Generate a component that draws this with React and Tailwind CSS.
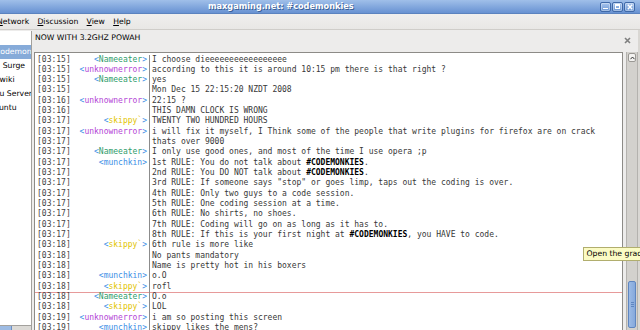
import React from 'react';

const NICK = {
  Nameeater: '#2f9d6c',
  unknownerror: '#b345d6',
  'skippy`': '#e2c400',
  munchkin: '#3d8fe6',
};

const lines = [
  ['03:15', 'Nameeater', 'I choose dieeeeeeeeeeeeeeeee'],
  ['03:15', 'unknownerror', 'according to this it is around 10:15 pm there is that right ?'],
  ['03:15', 'Nameeater', 'yes'],
  ['03:15', null, 'Mon Dec 15 22:15:20 NZDT 2008'],
  ['03:16', 'unknownerror', '22:15 ?'],
  ['03:16', null, 'THIS DAMN CLOCK IS WRONG'],
  ['03:17', 'skippy`', 'TWENTY TWO HUNDRED HOURS'],
  ['03:17', 'unknownerror', 'i will fix it myself, I Think some of the people that write plugins for firefox are on crack'],
  ['03:17', null, 'thats over 9000'],
  ['03:17', 'Nameeater', 'I only use good ones, and most of the time I use opera ;p'],
  ['03:17', 'munchkin', ['1st RULE: You do not talk about ', '#CODEMONKIES', '.']],
  ['03:17', null, ['2nd RULE: You DO NOT talk about ', '#CODEMONKIES', '.']],
  ['03:17', null, '3rd RULE: If someone says "stop" or goes limp, taps out the coding is over.'],
  ['03:17', null, '4th RULE: Only two guys to a code session.'],
  ['03:17', null, '5th RULE: One coding session at a time.'],
  ['03:17', null, '6th RULE: No shirts, no shoes.'],
  ['03:17', null, '7th RULE: Coding will go on as long as it has to.'],
  ['03:17', null, ['8th RULE: If this is your first night at ', '#CODEMONKIES', ', you HAVE to code.']],
  ['03:18', 'skippy`', '6th rule is more like'],
  ['03:18', null, 'No pants mandatory'],
  ['03:18', null, 'Name is pretty hot in his boxers'],
  ['03:18', 'munchkin', 'o.O'],
  ['03:18', 'skippy`', 'rofl', true],
  ['03:18', 'Nameeater', 'O.o'],
  ['03:18', 'skippy`', 'LOL'],
  ['03:19', 'unknownerror', 'i am so posting this screen'],
  ['03:19', 'munchkin', 'skippy likes the mens?'],
];

function Message({ msg }) {
  if (typeof msg === 'string') return msg;
  return (
    <>
      {msg[0]}
      <b className="font-bold text-black">{msg[1]}</b>
      {msg[2]}
    </>
  );
}

function Row({ time, nick, msg, marker }) {
  return (
    <div className="relative flex h-[10.33px] leading-[10.33px] whitespace-pre">
      <div className="w-[115px] shrink-0 flex justify-between pl-[2px] pr-[2px] border-r border-[#8c8c8c]">
        <span className="text-[#444]">[{time}]</span>
        {nick && (
          <span>
            <span className="text-[#3d8fe6]">&lt;</span>
            <span style={{ color: NICK[nick] }}>{nick}</span>
            <span className="text-[#3d8fe6]">&gt;</span>
          </span>
        )}
      </div>
      <div className="pl-[2px] text-[#383838]">
        <Message msg={msg} />
      </div>
      {marker && <div className="absolute left-0 right-0 bottom-[-1px] h-[1px] bg-[#e79a9a]" />}
    </div>
  );
}

function WinButton({ children }) {
  return (
    <div className="w-[11px] h-[10px] rounded-[2px] border border-[#3f69a8] bg-gradient-to-b from-[#a9c6ee] to-[#6c97d4] flex items-center justify-center shadow-[inset_0_0_0_1px_rgba(255,255,255,0.35)]">
      {children}
    </div>
  );
}

export default function App() {
  return (
    <div className="relative w-[640px] h-[330px] overflow-hidden bg-[#edeceb] flex flex-col font-['DejaVu_Sans',sans-serif] text-[7.7px] text-black">
      {/* Title bar */}
      <div className="h-[14px] shrink-0 flex items-center bg-gradient-to-b from-[#a0bfe9] to-[#6892d2] border-b border-[#5b83bf]">
        <div className="pl-[208px] text-[8.2px] font-bold text-white [text-shadow:1px_1px_0_#3b5f95]">
          maxgaming.net: #codemonkies
        </div>
        <div className="ml-auto mr-[5px] flex gap-[1px]">
          <WinButton>
            <div className="w-[5px] h-[1.5px] bg-white mt-[4px]" />
          </WinButton>
          <WinButton>
            <div className="w-[5px] h-[5px] border border-white border-t-2" />
          </WinButton>
          <WinButton>
            <svg width="6" height="6" viewBox="0 0 6 6">
              <path d="M0.8 0.8 L5.2 5.2 M5.2 0.8 L0.8 5.2" stroke="white" strokeWidth="1.4" />
            </svg>
          </WinButton>
        </div>
      </div>

      {/* Menu bar */}
      <div className="h-[16px] shrink-0 flex items-center gap-[8.3px] border-b border-[#cfcdc9] bg-gradient-to-b from-[#f0efee] to-[#e8e7e5]">
        <span className="ml-[-3px]"><u>N</u>etwork</span>
        <span><u>D</u>iscussion</span>
        <span><u>V</u>iew</span>
        <span><u>H</u>elp</span>
      </div>

      <div className="flex-1 flex min-h-0">
        {/* Channel tree */}
        <div className="w-[32px] shrink-0 mt-[1px] flex flex-col bg-white border-r border-[#a3a19d] overflow-hidden">
          <div className="h-[14px]" />
          <div className="h-[14px] flex items-center bg-[#86abd9] text-white whitespace-nowrap">
            <span className="ml-[-4px]">codemonkies</span>
          </div>
          <div className="h-[14px] flex items-center whitespace-nowrap">
            <span className="ml-[2.7px]">Surge</span>
          </div>
          <div className="h-[14px] flex items-center whitespace-nowrap">
            <span className="ml-[-0.5px]">wiki</span>
          </div>
          <div className="h-[14px] flex items-center whitespace-nowrap">
            <span className="ml-[-0.5px]">u Server</span>
          </div>
          <div className="h-[14px] flex items-center whitespace-nowrap">
            <span className="ml-[-1px]">untu</span>
          </div>
          <div className="mt-auto h-[5px] flex border-t border-[#a3a19d] bg-[#dcdad6]">
            <div className="w-[12px] bg-[#9dbbe3] border-r border-[#6b8fc4]" />
          </div>
        </div>

        {/* Main area */}
        <div className="flex-1 flex flex-col min-w-0 pl-[2px]">
          <div className="h-[22px] shrink-0 flex items-start">
            <span className="mt-[2px] ml-[1px]">NOW WITH 3.2GHZ POWAH</span>
            <svg className="ml-auto mr-[7px] mt-[7px]" width="7" height="7" viewBox="0 0 7 7">
              <path d="M1 1 L6 6 M6 1 L1 6" stroke="#7f7f7f" strokeWidth="1.6" />
            </svg>
          </div>

          <div className="flex-1 flex min-h-0">
            <div className="w-[589px] shrink-0 bg-white border border-[#8d8b87] border-b-0 pt-[1.5px] overflow-hidden font-['DejaVu_Sans_Mono',monospace] text-[8px]">
              {lines.map(([t, n, m, mk], i) => (
                <Row key={i} time={t} nick={n} msg={m} marker={mk} />
              ))}
            </div>

            {/* Scrollbar */}
            <div className="w-[12px] ml-[3px] shrink-0 flex flex-col bg-[#d3d1cd] border-x border-[#b4b2ae]">
              <div className="h-[9px] mx-[1px] mt-[1px] rounded-[2px] border border-[#9a9894] bg-[#f3f2f0] flex items-center justify-center">
                <svg width="5" height="4" viewBox="0 0 5 4">
                  <path d="M0.5 3.2 L2.5 1 L4.5 3.2" fill="none" stroke="#333" strokeWidth="1" />
                </svg>
              </div>
              <div className="flex-1" />
              <div className="h-[47px] mx-[1px] rounded-[2px] border border-[#5f86c0] bg-gradient-to-r from-[#9cbbe6] to-[#86a9dc] flex flex-col items-center justify-center gap-[1px]">
                <div className="w-[3px] h-[1px] bg-[#5f86c0]" />
                <div className="w-[3px] h-[1px] bg-[#5f86c0]" />
                <div className="w-[3px] h-[1px] bg-[#5f86c0]" />
              </div>
              <div className="h-[2px]" />
            </div>
          </div>
        </div>
        <div className="w-[2px] shrink-0 bg-[#d9d7d3]" />
      </div>

      {/* Tooltip */}
      <div className="absolute left-[583px] top-[247px] h-[14px] pl-[2.5px] pr-[4px] flex items-center whitespace-nowrap bg-[#fbfbc4] border border-[#b1ae6e] text-[7.7px]">
        Open the gradient editor
      </div>
    </div>
  );
}
